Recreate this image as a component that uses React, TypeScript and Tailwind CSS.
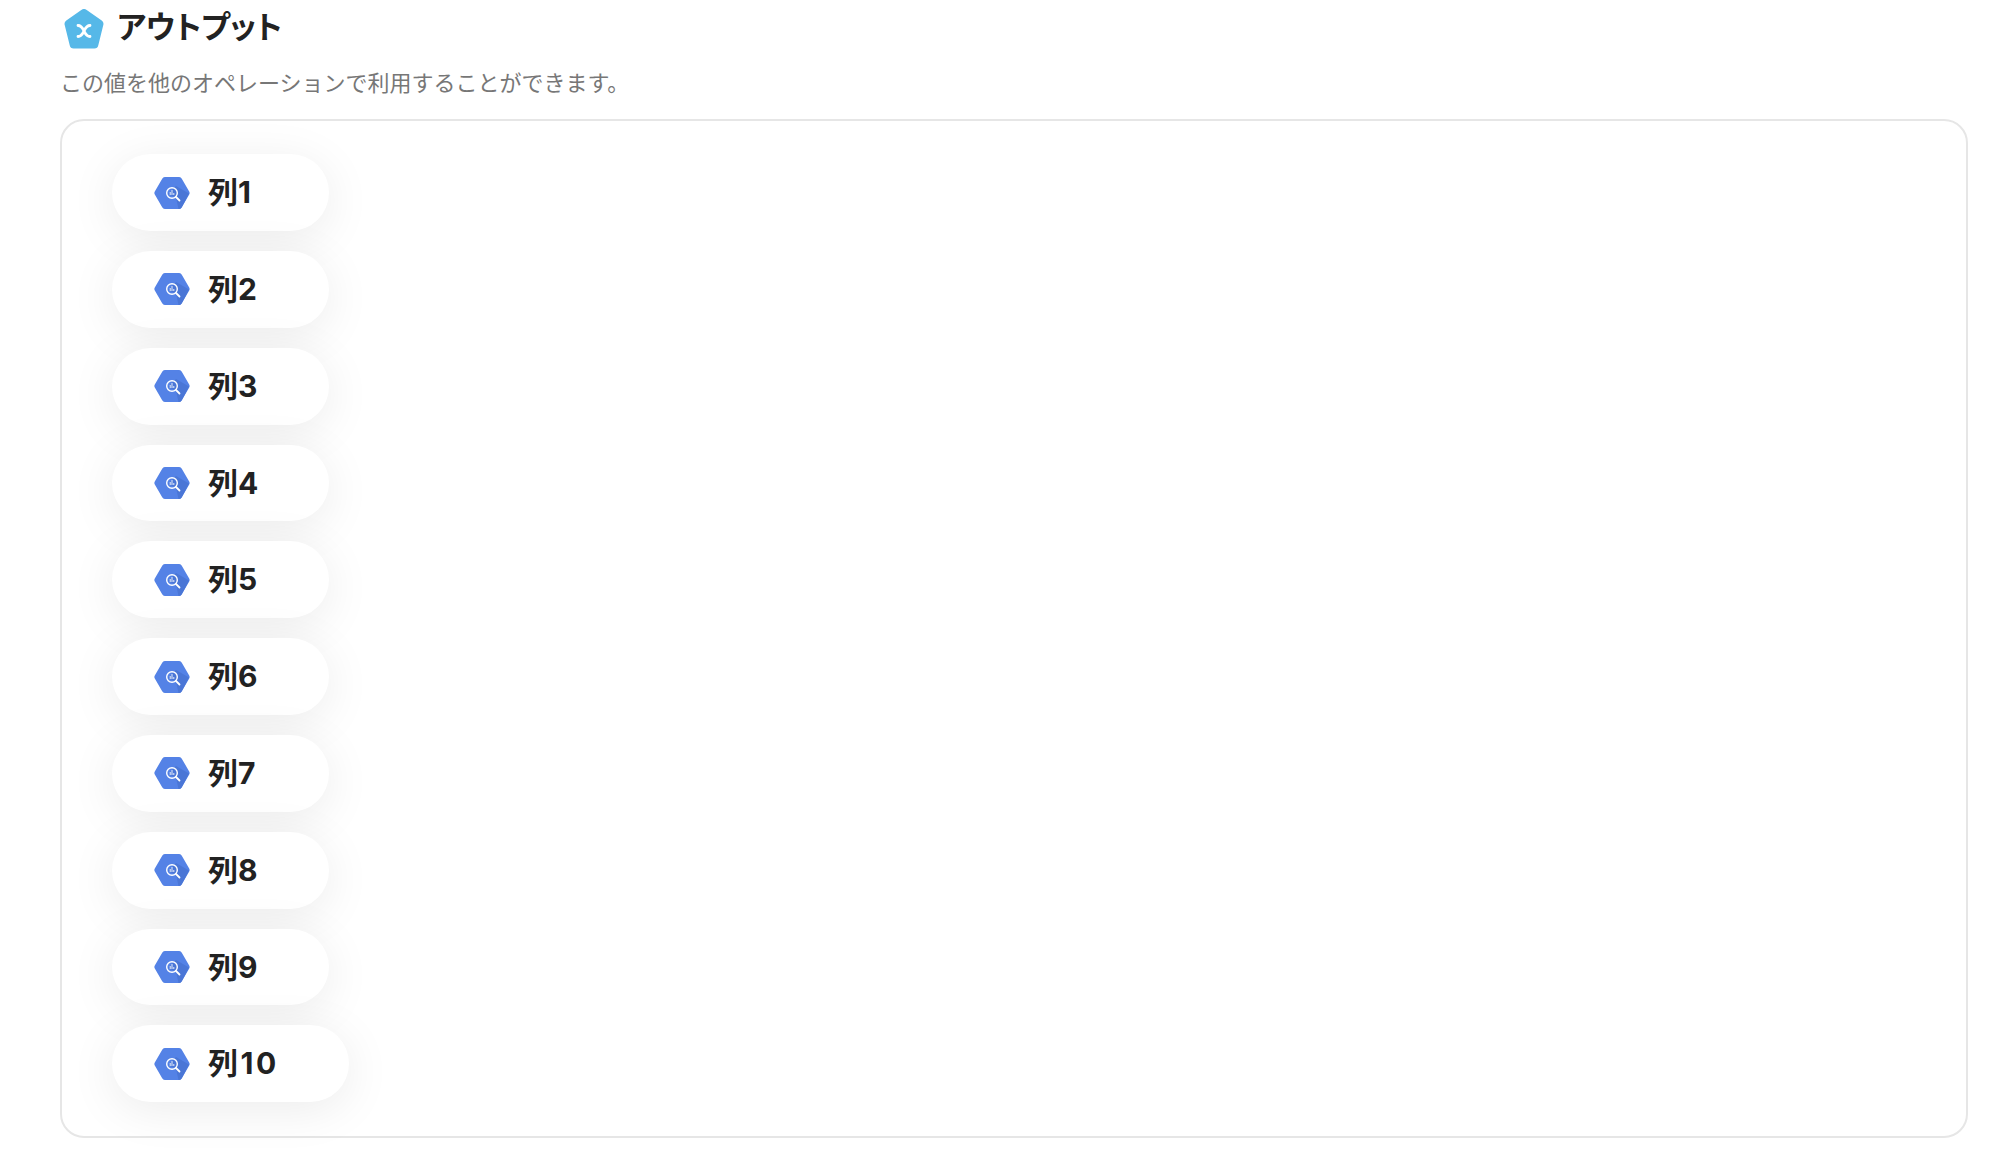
import React from "react";

const COLUMNS = ["列1", "列2", "列3", "列4", "列5", "列6", "列7", "列8", "列9", "列10"];

function OutputIcon() {
  return (
    <svg width="40" height="40" viewBox="0 0 40 40" className="shrink-0">
      <path
        d="M17.300 1 2.300 11.600A4 4 0 0 0 .7 16l5 20.200A4 4 0 0 0 9.600 39.400h20.800a4 4 0 0 0 3.900-3.200l5-20.200a4 4 0 0 0-1.600-4.400L22.700 1a4.500 4.500 0 0 0-5.400 0z"
        fill="#56b8e8"
      />
      <path
        d="M14 16.500c3.500 0 4.500 2.500 6 5.500s2.500 5.500 6 5.500M26 16.500c-3.500 0-4.500 2.500-6 5.500s-2.500 5.500-6 5.500"
        fill="none"
        stroke="#fff"
        strokeWidth="2.800"
        strokeLinecap="round"
      />
    </svg>
  );
}

function BigQueryIcon() {
  return (
    <svg width="36" height="32" viewBox="0 0 36 32" className="shrink-0">
      <path
        d="M.8 14.500 8.200 1.700A3 3 0 0 1 10.800 0h14.400a3 3 0 0 1 2.600 1.700l7.400 12.800a3 3 0 0 1 0 3l-7.400 12.800a3 3 0 0 1-2.600 1.700H10.800a3 3 0 0 1-2.600-1.700L.8 17.500a3 3 0 0 1 0-3z"
        fill="#5482e6"
      />
      <path d="M22 20.500 14 17l8-8 13 7.500-7.200 13.800a3 3 0 0 1-2.600 1.700h-.7z" fill="#4a76d6" />
      <circle cx="18" cy="16" r="5.300" fill="none" stroke="#fff" strokeWidth="1.400" />
      <path d="M22 20 25.500 23.500" stroke="#fff" strokeWidth="1.800" strokeLinecap="round" />
      <path d="M16.200 15v3M18 13v5M19.800 16v2" stroke="#e4ecfb" strokeWidth="1" />
    </svg>
  );
}

export default function App() {
  return (
    <div className="min-h-[1168px] bg-white pl-[60px] pr-[48px] pt-[9px] font-['Noto_Sans_CJK_JP',sans-serif]">
      {/* Header */}
      <div className="flex h-[40px] items-start gap-[13px] pl-[4px]">
        <OutputIcon />
        <h2 className="text-[31px] leading-[32px] font-bold text-[#222] [font-feature-settings:'palt']">アウトプット</h2>
      </div>
      <p className="mt-[16px] text-[22px] leading-[32px] text-[#777]">
        この値を他のオペレーションで利用することができます。
      </p>

      {/* Output list */}
      <div className="mt-[22px] h-[1019px] rounded-[24px] border-2 border-[#e6e6e6] bg-white pl-[50px] pt-[33.3px]">
        <div className="flex flex-col items-start gap-[20px]">
          {COLUMNS.map((name) => (
            <div
              key={name}
              className="flex h-[76.8px] min-w-[217px] items-center gap-[18px] rounded-full bg-white pl-[42px] pr-[70px] shadow-[0_8px_48px_rgba(0,0,0,0.08)]"
            >
              <BigQueryIcon />
              <span
                className={
                  name === "列10"
                    ? "font-['Inter','Noto_Sans_CJK_JP',sans-serif] text-[30px] font-bold tracking-[2.5px] text-[#222]"
                    : "font-['Inter','Noto_Sans_CJK_JP',sans-serif] text-[30px] font-bold text-[#222]"
                }
              >
                {name}
              </span>
            </div>
          ))}
        </div>
      </div>
    </div>
  );
}
